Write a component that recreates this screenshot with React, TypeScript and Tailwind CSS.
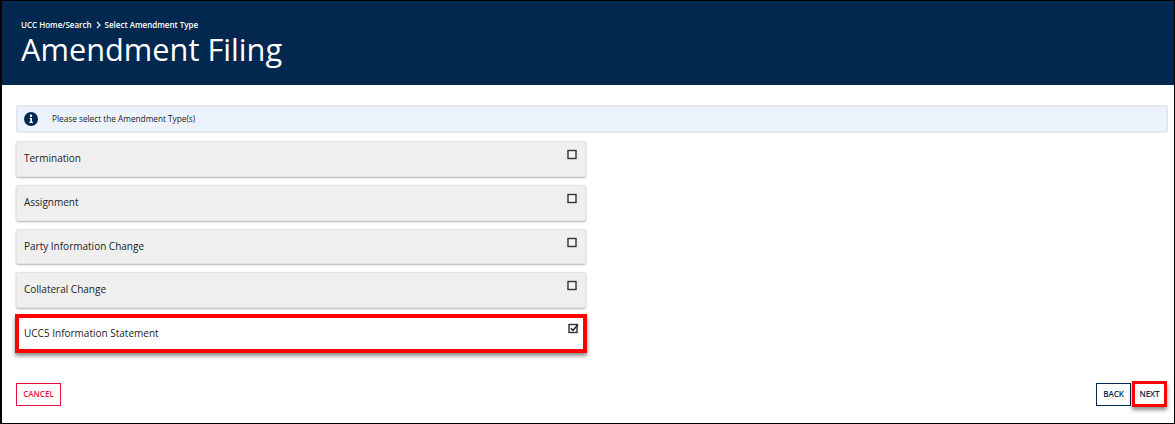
import React from 'react';

const types = [
  { label: 'Termination', checked: false, mark: false },
  { label: 'Assignment', checked: false, mark: false },
  { label: 'Party Information Change', checked: false, mark: false },
  { label: 'Collateral Change', checked: false, mark: false },
  { label: 'UCC5 Information Statement', checked: true, mark: true },
];

const CheckBox = ({ checked }: { checked: boolean }) => (
  <svg width="11" height="11" viewBox="0 0 11 11" className={checked ? 'mt-[5px] shrink-0' : 'mt-[7px] shrink-0'}>
    <rect x="1" y="1.5" width="8" height="8" fill={checked ? '#fff' : '#f4f4f4'} stroke="#333" strokeWidth="1.4" />
    {checked && <path d="M2.8 5.2 L5 7.4 L10 1.6" fill="none" stroke="#222" strokeWidth="1.5" />}
  </svg>
);

export default function App() {
  return (
    <div
      className="flex h-[424px] w-[1175px] flex-col overflow-hidden border-t border-r border-b border-l-2 border-black bg-white"
      style={{ fontFamily: '"Open Sans", "Noto Sans", sans-serif' }}
    >
      <header className="flex h-[84px] shrink-0 flex-col bg-[#03284f] pl-[19px] pt-[19px] text-white">
        <div className="flex h-[10px] items-center text-[8px] font-semibold leading-[10px]">
          <span>UCC Home/Search</span>
          <svg width="5" height="8" viewBox="0 0 5 8" className="mx-[4px]">
            <path d="M1 1 L4 4 L1 7" fill="none" stroke="#fff" strokeWidth="1.1" />
          </svg>
          <span>Select Amendment Type</span>
        </div>
        <h1 className="-mt-[1px] text-[30.75px] font-normal leading-[40px]">Amendment Filing</h1>
      </header>

      <main className="flex flex-1 flex-col pl-[14px] pr-[6px] pt-[20px]">
        <div className="flex h-[28px] items-center rounded-[2px] border-2 border-[#e3e7ec] bg-[#edf3fd] pl-[6px] text-[8.25px] text-[#222]">
          <svg width="14" height="14" viewBox="0 0 14 14" className="shrink-0">
            <circle cx="7" cy="7" r="7" fill="#03284f" />
            <circle cx="7" cy="3.8" r="1.2" fill="#fff" />
            <path d="M5.5 6 H8 V9.8 H9 V11 H5.3 V9.8 H6.3 V7.1 H5.5 Z" fill="#fff" />
          </svg>
          <span className="ml-[14px] mt-[1px]">Please select the Amendment Type(s)</span>
        </div>

        <div className="mt-[8px] flex w-[570px] flex-col gap-[8px]">
          {types.map((t) => (
            <div
              key={t.label}
              className={
                t.mark
                  ? '-mx-[1px] -mt-[2px] flex h-[39px] justify-between border-4 border-[#ff0000] bg-white pl-[5px] pr-[4px] shadow-[0_3px_4px_rgba(0,0,0,0.45)]'
                  : 'flex h-[35.75px] justify-between rounded-[2px] border border-[#e3e3e3] bg-[#efefef] pl-[7px] pr-[7px] shadow-[0_1px_2px_rgba(0,0,0,0.3)]'
              }
            >
              <span className={t.mark ? 'mt-[5px] text-[10px] leading-[20px] text-[#222]' : 'mt-[6px] text-[10px] leading-[20px] text-[#222]'}>
                {t.label}
              </span>
              <CheckBox checked={t.checked} />
            </div>
          ))}
        </div>

        <div className="mt-[28px] flex items-center justify-between">
          <button className="flex h-[23px] w-[45px] items-center justify-center border border-[#e8103c] text-[8px] font-semibold text-[#e8103c]">
            CANCEL
          </button>
          <div className="mr-[1px] flex items-center gap-[1px]">
            <button className="flex h-[23px] w-[35px] items-center justify-center border border-[#03284f] text-[8px] font-semibold text-[#03284f]">
              BACK
            </button>
            <button className="flex h-[26px] w-[35px] items-center justify-center border-[3px] border-[#ff0000] text-[8px] font-semibold text-[#03284f] shadow-[0_3px_4px_rgba(0,0,0,0.45)]">
              NEXT
            </button>
          </div>
        </div>
      </main>
    </div>
  );
}
